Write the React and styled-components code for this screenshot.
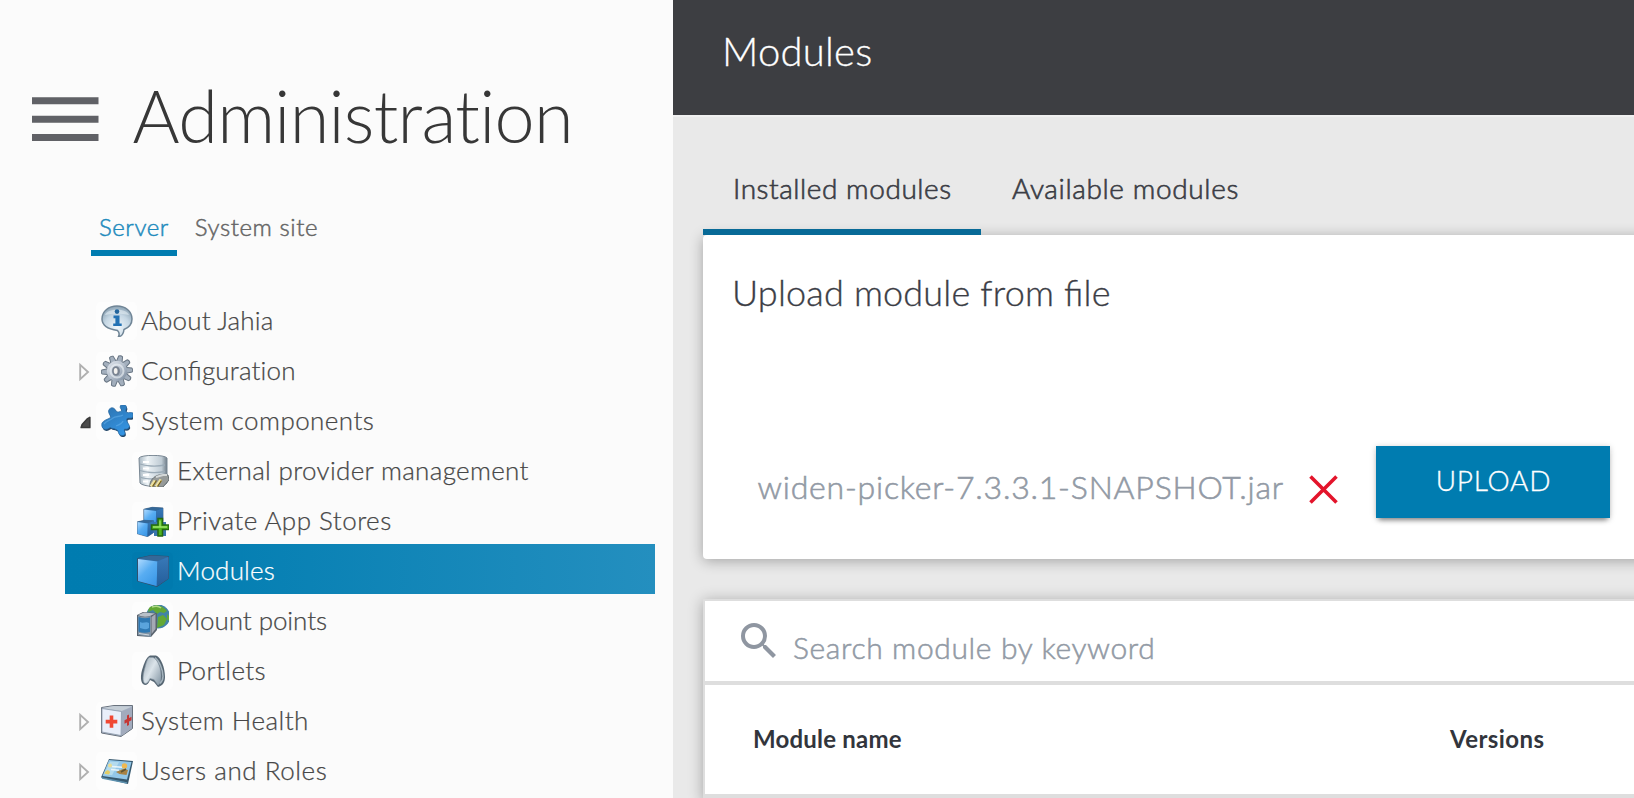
import React from 'react';
import styled, { createGlobalStyle, css } from 'styled-components';
import { MdSearch } from 'react-icons/md';

const GlobalStyle = createGlobalStyle`
  *, *::before, *::after { box-sizing: border-box; }
  html, body { margin: 0; height: 100%; overflow: hidden; }
  body {
    font-family: Lato, "Open Sans", sans-serif;
    font-weight: 300;
    background: #e9e9e9;
  }
`;

const Page = styled.div`
  display: flex;
  height: 798px;
  overflow: hidden;
`;

const Sidebar = styled.aside`
  flex: 0 0 673px;
  background: #fbfbfb;
  overflow: hidden;
`;

const SidebarHeader = styled.header`
  display: flex;
  align-items: flex-start;
  padding: 78px 0 0 32px;
`;

const MenuIcon = styled.svg`
  width: 67px;
  height: 45px;
  margin-top: 19px;
  fill: #606166;
`;

const SidebarTitle = styled.h1`
  margin: 0 0 0 33.6px;
  font-size: 72px;
  line-height: 74px;
  height: 72px;
  font-weight: 300;
  letter-spacing: -0.74px;
  color: #373737;
  white-space: nowrap;
`;

const SiteTabs = styled.nav`
  display: flex;
  gap: 10px;
  padding: 53px 0 0 91px;
`;

const SiteTab = styled.a`
  padding: 0 8px;
  height: 53px;
  line-height: 48px;
  font-size: 24px;
  -webkit-text-stroke: 0.5px currentColor;
  letter-spacing: 0.56px;
  color: ${(p) => (p.$active ? '#1f8bbd' : '#666')};
  border-bottom: 6px solid ${(p) => (p.$active ? '#007cb0' : 'transparent')};
`;

const Tree = styled.ul`
  list-style: none;
  margin: 38px 18px 0 65px;
  padding: 0;
`;

const TreeRow = styled.li`
  display: flex;
  align-items: center;
  height: 50px;
  padding-left: ${(p) => (p.$nested ? 48 : 12)}px;
  color: #474747;
  ${(p) =>
    p.$selected &&
    css`
      color: #fff;
      background: linear-gradient(90deg, #007cb0 0%, #017db1 18%, #248fbf 100%);
    `}
`;

const Arrow = styled.svg`
  flex: none;
  width: 16px;
  height: 22px;
  margin-top: 6px;
`;

const IconTile = styled.span`
  flex: none;
  display: grid;
  place-items: center;
  width: 41px;
  height: 38px;
  margin: 4px 0 0 2.5px;
  border-radius: 5px;
  background: ${(p) => (p.$selected ? '#007aae' : '#fdfdfd')};

  svg { width: 32px; height: 32px; overflow: hidden; margin-left: 2px; }
`;

const TreeLabel = styled.span`
  margin: 2px 0 0 4.5px;
  font-size: 26px;
  line-height: 40px;
  letter-spacing: ${(p) => p.$tracking}px;
  -webkit-text-stroke: 0.25px currentColor;
  white-space: nowrap;
`;

const Ligature = styled.span`
  font-feature-settings: "liga" 1;
`;

const Content = styled.main`
  flex: 1;
  min-width: 0;
  overflow: hidden;
  background: #e9e9e9;
`;

const TopBar = styled.header`
  height: 115px;
  padding-left: 49px;
  background: #3d3e42;
  box-shadow: 0 2px 0 #f0f0f0;
  color: #fff;
  font-size: 40px;
  line-height: 103px;
  letter-spacing: 0.25px;
  -webkit-text-stroke: 0.3px currentColor;
`;

const ModuleTabs = styled.nav`
  display: flex;
  padding: 32px 0 0 30px;
`;

const ModuleTab = styled.a`
  height: 88px;
  padding: 0 29.5px 0 30px;
  font-size: 28px;
  line-height: 82px;
  letter-spacing: 0.56px;
  -webkit-text-stroke: 0.65px currentColor;
  color: #3b3d45;
  white-space: nowrap;
  border-bottom: 6px solid ${(p) => (p.$active ? '#086a97' : 'transparent')};

  &:first-child { width: 278px; }
  &:last-child { padding-left: 31px; letter-spacing: 0.64px; }
`;

const Panel = styled.section`
  width: 1100px;
  margin-left: 30px;
  background: #fff;
  box-shadow: 0 2px 14px rgba(0, 0, 0, 0.3);
`;

const UploadPanel = styled(Panel)`
  height: 324px;
  padding: 33px 0 0 29px;
  border-radius: 4px;
`;

const PanelTitle = styled.h2`
  margin: 0;
  font-size: 36px;
  line-height: 49px;
  height: 48px;
  font-weight: 300;
  letter-spacing: 0.18px;
  font-feature-settings: "liga" 1;
  -webkit-text-stroke: 0.35px currentColor;
  color: #3b3d45;
`;

const UploadRow = styled.div`
  display: flex;
  align-items: flex-start;
  padding: 130px 0 0 25.5px;
`;

const FileName = styled.span`
  width: 551px;
  padding-top: 9px;
  font-size: 32px;
  line-height: 63px;
  letter-spacing: 0.79px;
  -webkit-text-stroke: 0.6px currentColor;
  color: #929aa5;
  white-space: nowrap;
`;

const RemoveIcon = styled.svg`
  width: 29px;
  height: 29px;
  margin-top: 28.5px;
  fill: none;
  stroke: #e3142b;
  stroke-width: 3.6;
`;

const UploadButton = styled.button`
  width: 234px;
  height: 72px;
  margin-left: 38.5px;
  padding: 0 0 4px 1px;
  border: 0;
  background: #007cb0;
  box-shadow: 0 5px 5px -3px rgba(0, 0, 0, 0.4), 0 1px 6px rgba(0, 0, 0, 0.22);
  color: #fff;
  font: 300 28px/68px Lato, "Open Sans", sans-serif;
  letter-spacing: 0.8px;
  -webkit-text-stroke: 0.35px currentColor;
`;

const ModulesPanel = styled(Panel)`
  margin-top: 40px;
  border: 2px solid #dedede;
`;

const SearchBar = styled.label`
  display: flex;
  height: 84px;
  padding-left: 30px;
  border-bottom: 4px solid #dedede;
  color: #8f96a1;

  svg { flex: none; margin-top: 16px; }
`;

const SearchField = styled.span`
  margin: 6px 0 0 10px;
  font-size: 30px;
  line-height: 80px;
  letter-spacing: 0.64px;
  -webkit-text-stroke: 0.55px currentColor;
  color: #929aa5;
`;

const TableHead = styled.div`
  display: grid;
  grid-template-columns: 697px 1fr;
  height: 113px;
  padding-left: 48px;
  border-bottom: 4px solid #dedede;
`;

const ColumnTitle = styled.span`
  font-size: 24px;
  line-height: 107px;
  font-weight: 700;
  letter-spacing: ${(p) => p.$tracking}px;
  color: #32353c;
`;

const InfoIcon = () => (
  <svg viewBox="0 0 32 32">
    <defs>
      <radialGradient id="bub" cx=".5" cy=".7" r=".7">
        <stop offset="0" stopColor="#f1f7fb" /><stop offset=".6" stopColor="#c5d7e4" /><stop offset="1" stopColor="#8ca3b4" />
      </radialGradient>
    </defs>
    <path d="M16 1C8 1 1 6 1 14c0 6 5.500 10 15.500 11.500 1.500 1.500 2 4 1 6 3 0 5-2.500 5.500-7C28 22.500 31 18.500 31 14 31 6 24 1 16 1z" fill="url(#bub)" stroke="#708596" strokeWidth="1.500" />
    <path d="M4 10C6 3 26 3 28 10c-8-2-16-2-24 0z" fill="#e2edf4" opacity=".6" />
    <circle cx="16" cy="6.600" r="2.300" fill="#22659d" />
    <path d="M12.500 10.500h6v8h2.200v2.500h-8.500v-2.500h2.200v-5.300h-1.900z" fill="#2372b4" />
  </svg>
);

const GearIcon = () => (
  <svg viewBox="0 0 32 32">
    <defs>
      <linearGradient id="gear" x1="0" y1="0" x2="1" y2="1">
        <stop offset="0" stopColor="#e3e8ef" /><stop offset=".5" stopColor="#b6c0cd" /><stop offset="1" stopColor="#75869a" />
      </linearGradient>
    </defs>
    <g fill="#a3afbd" stroke="#697684" strokeWidth="1">
      {[0, 36, 72, 108, 144, 180, 216, 252, 288, 324].map((a) => (
        <path key={a} d="M12.800 9L14 1q2-1.500 4 0l1.200 8z" transform={`rotate(${a + 14} 16 16)`} />
      ))}
    </g>
    <circle cx="16" cy="16" r="10.200" fill="url(#gear)" />
    <circle cx="16" cy="16" r="6.500" fill="none" stroke="#eff3f7" strokeWidth="2" opacity=".6" />
    <ellipse cx="15" cy="16" rx="3.900" ry="4.800" fill="#798391" />
    <ellipse cx="14.700" cy="16" rx="1.900" ry="2.900" fill="#f3f1ee" />
  </svg>
);

const PuzzleIcon = () => (
  <svg viewBox="0 0 32 32">
    <defs>
      <linearGradient id="puz" x1="0" y1="0" x2=".6" y2="1">
        <stop offset="0" stopColor="#2c70ab" /><stop offset="1" stopColor="#3495e4" />
      </linearGradient>
      <path id="puzShape" d="M9 13C11 11 6 8 8 4.500c3-3.500 6-1 7 1.500 1 1.500 4 1 5.500 0C21 4 18 3 19.500.500 22-1 26-.500 25.500 3c-.5 2-1.500 3 .5 4.500 2 .5 4-.5 6 .5v4c-2 2-4 .5-6 1.500-1.500 2.500 2 5 2.500 8-.5 2-2.500 3-5 2.500-1 1.500 1 3 .5 5-1 2-4.500 2-6 0-1-2-.5-4-3-4.500-2-1.500-4-.5-5.500-2-2 1-4 2.500-6.500 1.500C.500 22.500.500 20 1 18c2-3 5-3.500 8-5z" />
    </defs>
    <use href="#puzShape" y="1.600" x=".8" fill="#24486a" />
    <use href="#puzShape" fill="url(#puz)" stroke="#28679f" strokeWidth=".7" />
    <path d="M3 19c3-4 6-3 9-6 2-2 7-1 10-3M15 21c3-1 6-2 7-5" stroke="#6ab4ee" strokeWidth="1.300" fill="none" opacity=".5" />
  </svg>
);

const DatabaseIcon = () => (
  <svg viewBox="0 0 32 32">
    <defs>
      <linearGradient id="dbs">
        <stop offset="0" stopColor="#a8b7c2" /><stop offset=".3" stopColor="#edf3f6" /><stop offset=".8" stopColor="#c0ccd5" /><stop offset="1" stopColor="#6f7d88" />
      </linearGradient>
    </defs>
    <path d="M2 3C4-.500 28-.500 30 3v25c-4 5-24 4-27 0z" fill="url(#dbs)" stroke="#798793" />
    <path d="M3 9c5 2 16 3 25 1M3 15.500c5 2 16 3 25 1M3 22c4 2 9 2 14 2" stroke="#9babb7" strokeWidth="1.300" fill="none" />
    <path d="M6 7h6M6 13.500h6M6 20h6M6 26.500h5" stroke="#fff" strokeWidth="2" />
    <path d="M13 32c-1-6 4-11 9-12h9l1 5-6 7z" fill="#969a99" stroke="#666e71" />
    <path d="M19 22l7-2h4" stroke="#d4d8d8" strokeWidth="2" fill="none" />
    <path d="M14 31.500l4-6M19 31.500l5-7" stroke="#efe2a0" strokeWidth="3" />
    <path d="M15.500 31.500l4-6M20.500 31.500l4-6" stroke="#766018" strokeWidth="1.300" />
  </svg>
);

const CubeShape = ({ x = 0, y = 0, s = 1 }) => (
  <g transform={`translate(${x} ${y}) scale(${s})`}>
    <path d="M.500 3.500L14 .500l17.500 1v22L20 31.500.500 26z" fill="#2f6dab" stroke="#31506e" />
    <path d="M.500 3.500L14 .500l17.500 1L20.500 6z" fill="#346898" />
    <path d="M1 4l19.500 2.500-1 24.500L1 26z" fill="url(#cubeFace)" />
    <path d="M20.500 6.500l11-4.500v21.500L20 31z" fill="url(#cubeSide)" />
  </g>
);

const CubeDefs = () => (
  <defs>
    <linearGradient id="cubeFace" x1="0" y1="0" x2=".7" y2="1">
      <stop offset="0" stopColor="#b0dbff" /><stop offset=".5" stopColor="#58adf2" /><stop offset="1" stopColor="#3c99e8" />
    </linearGradient>
    <linearGradient id="cubeSide" x1="0" y1="0" x2="0" y2="1">
      <stop offset="0" stopColor="#3879b8" /><stop offset="1" stopColor="#245e9b" />
    </linearGradient>
  </defs>
);

const StoresIcon = () => (
  <svg viewBox="0 0 32 32">
    <CubeShape x={6.5} y={2} s={0.62} />
    <CubeShape x={0} y={15} s={0.53} />
    <path d="M17 17h12v14H17z" fill="#3a77ae" />
    <path d="M21 13.500h4.500v6.500h6.500v4.500h-6.500v6.500h-4.500v-6.500h-6.500v-4.500h6.500z" fill="#4fb41d" stroke="#256910" strokeWidth="1.500" />
    <path d="M23 15.500v6.500h-7M23 22h7" stroke="#a0e56c" strokeWidth="1.300" fill="none" />
  </svg>
);

const CubeIcon = () => (
  <svg viewBox="0 0 32 32">
    <CubeDefs />
    <CubeShape />
  </svg>
);

const MountIcon = () => (
  <svg viewBox="0 0 32 32">
    <circle cx="21" cy="11.500" r="12" fill="#4283a6" />
    <path d="M12 3c5-5 14-3 18 3l-3 2-4-1-3 2-4-4-5 2zM21 12l5-2 4 4-3 6-7 3zM30 9l2 2v5l-2-2z" fill="#63a834" />
    <path d="M15 2c3-1 7-1 9 1" stroke="#b0d98a" strokeWidth="1.500" fill="none" />
    <path d="M0 10l6-3 14 1v17l-6 7L0 31z" fill="#59636e" />
    <path d="M1 10.500c4 2 9 2 13 .5V32L1 30z" fill="#7f93a5" />
    <path d="M1.500 12c4 1.500 8 1.500 11.500.5V27c-4 1-8 1-11.500-.5z" fill="#2f79b3" />
    <path d="M3 17c3 2 6-1 9 1v5c-3 2-6 1-9 0z" fill="#5aa4dc" />
    <path d="M14.500 12l4-3v15l-4 5z" fill="#a4a9b4" />
    <path d="M1 10l6-2.500 11 1-5 2.500c-4 1-8 1-12-1z" fill="#b9c1c9" />
    <path d="M2 28.500l10 1.500" stroke="#cfd6dc" strokeWidth="1.200" />
  </svg>
);

const PortletIcon = () => (
  <svg viewBox="0 0 32 32">
    <defs>
      <linearGradient id="port" x1="0" y1="0" x2="1" y2=".8">
        <stop offset="0" stopColor="#9caab5" /><stop offset=".5" stopColor="#dbe4ea" /><stop offset="1" stopColor="#8fa0ad" />
      </linearGradient>
    </defs>
    <path d="M13 .500h6c5 2 9 12 9 21.500 0 6-3 9-7 10l-4-5-4-2c-1 3-3 5-5 5C3 29 3 20 6 12 8 6 10 2 13 .500z" fill="#566673" />
    <path d="M12 2.500h4c5 2 8 11 8 18 0 5-1 9-3 9.500l-4-5.500-4-1c-1 3-3 5-5 5-3-2-2-9 0-16 1-4 2-8 4-10z" fill="url(#port)" stroke="#8b9ba7" strokeWidth=".6" />
    <path d="M18 2.500c4 3 8 12 8 19 0 3-1 5-3 7" stroke="#a5b4be" strokeWidth="1.500" fill="none" />
  </svg>
);

const HealthIcon = () => (
  <svg viewBox="0 0 32 32">
    <path d="M.500 2.500L13 .500h18.500v23L20 31.500.500 28z" fill="#a8b3c6" stroke="#69727d" />
    <path d="M1 3L13 1l18 .5L20.500 6z" fill="#c5ced6" />
    <path d="M1 3.500l19.500 3-.5 24L1 27z" fill="#e9effa" stroke="#8d9bab" strokeWidth=".8" />
    <path d="M21 6.500l10-4.500v21l-10 7.500z" fill="#a2abbd" />
    <path d="M8.700 10.500h3.600v4.200h4v3.800h-4v4.200h-3.600v-4.200h-4v-3.800h4z" fill="#f04834" />
    <path d="M26 10.500l2-1v3.500l2.500-1.200v3.500l-2.500 1.200v3.500l-2 1V17.500L23.500 18.700v-3.500l2.500-1.200z" fill="#c53734" />
  </svg>
);

const UsersIcon = () => (
  <svg viewBox="0 0 32 32">
    <path d="M8 4l24 2-5 23L0 22.500z" fill="#36586e" />
    <path d="M8 5l22.500 2-4.500 17.500L1.500 21z" fill="#93c7e8" />
    <path d="M9 6.500l9 .8-7 13-8-1z" fill="#b4dbee" />
    <circle cx="9" cy="10.500" r="2" fill="#e9dc93" />
    <path d="M4 17c2-3 5-2 5 .5l-1 2-4.500-.7z" fill="#e3cd66" />
    <path d="M11 11.500l10 .8M10 14.500l8 .7" stroke="#e9f5fa" strokeWidth="1.500" />
    <circle cx="23.500" cy="11" r="2.700" fill="#efb851" />
    <path d="M15 17l7-3 5 1-1.500 5-7-1z" fill="#a88243" />
    <path d="M20 17l5-3" stroke="#5f5432" strokeWidth="1.800" />
    <path d="M1 23l25 5" stroke="#5d91af" strokeWidth="1.500" />
  </svg>
);

const ClosedArrow = () => (
  <Arrow viewBox="0 0 16 22">
    <path d="M3.200 3.800v14.400L11 11z" fill="#fdfdfd" stroke="#b0b0b0" strokeWidth="1.900" />
  </Arrow>
);

const OpenArrow = () => (
  <Arrow viewBox="0 0 16 22">
    <path d="M12.800 6.500v10H4.200l1-3 5-5.500z" fill="#4c4c4c" stroke="#3b3b3b" strokeWidth="1.700" strokeLinejoin="round" />
  </Arrow>
);

const EmptyArrow = () => <Arrow viewBox="0 0 16 22" />;

const arrows = { closed: ClosedArrow, open: OpenArrow, none: EmptyArrow };

const items = [
  { id: 'about', label: 'About Jahia', Icon: InfoIcon, arrow: 'none', tracking: 0.15 },
  { id: 'config', label: <>Con<Ligature>fi</Ligature>guration</>, Icon: GearIcon, arrow: 'closed', tracking: 0.18 },
  { id: 'components', label: 'System components', Icon: PuzzleIcon, arrow: 'open', tracking: 0.44 },
  { id: 'providers', label: 'External provider management', Icon: DatabaseIcon, nested: true, arrow: 'none', tracking: 0.33 },
  { id: 'stores', label: 'Private App Stores', Icon: StoresIcon, nested: true, arrow: 'none', tracking: 0.48 },
  { id: 'modules', label: 'Modules', Icon: CubeIcon, nested: true, arrow: 'none', selected: true, tracking: 0.2 },
  { id: 'mounts', label: 'Mount points', Icon: MountIcon, nested: true, arrow: 'none', tracking: -0.07 },
  { id: 'portlets', label: 'Portlets', Icon: PortletIcon, nested: true, arrow: 'none', tracking: 0.36 },
  { id: 'health', label: 'System Health', Icon: HealthIcon, arrow: 'closed', tracking: 0.46 },
  { id: 'users', label: 'Users and Roles', Icon: UsersIcon, arrow: 'closed', tracking: 0.55 },
];

export default function App() {
  return (
    <>
      <GlobalStyle />
      <Page>
        <Sidebar>
          <SidebarHeader>
            <MenuIcon viewBox="0 0 67 45">
              <path d="M0 .2h66.500v7H0zM0 18.700h66.500v7H0zM0 37h66.500v7H0z" />
            </MenuIcon>
            <SidebarTitle>Administration</SidebarTitle>
          </SidebarHeader>
          <SiteTabs>
            <SiteTab $active>Server</SiteTab>
            <SiteTab>System site</SiteTab>
          </SiteTabs>
          <Tree>
            {items.map(({ id, label, Icon, arrow, nested, selected, tracking }) => {
              const ArrowIcon = arrows[arrow];
              return (
                <TreeRow key={id} $nested={nested} $selected={selected}>
                  <ArrowIcon />
                  <IconTile $selected={selected}><Icon /></IconTile>
                  <TreeLabel $tracking={tracking}>{label}</TreeLabel>
                </TreeRow>
              );
            })}
          </Tree>
        </Sidebar>
        <Content>
          <TopBar>Modules</TopBar>
          <ModuleTabs>
            <ModuleTab $active>Installed modules</ModuleTab>
            <ModuleTab>Available modules</ModuleTab>
          </ModuleTabs>
          <UploadPanel>
            <PanelTitle>Upload module from file</PanelTitle>
            <UploadRow>
              <FileName>widen-picker-7.3.3.1-SNAPSHOT.jar</FileName>
              <RemoveIcon viewBox="0 0 29 29">
                <path d="M1.500 1.500l26 26M27.500 1.500l-26 26" />
              </RemoveIcon>
              <UploadButton>UPLOAD</UploadButton>
            </UploadRow>
          </UploadPanel>
          <ModulesPanel>
            <SearchBar>
              <MdSearch size={48} />
              <SearchField>Search module by keyword</SearchField>
            </SearchBar>
            <TableHead>
              <ColumnTitle $tracking={0.2}>Module name</ColumnTitle>
              <ColumnTitle $tracking={0.42}>Versions</ColumnTitle>
            </TableHead>
          </ModulesPanel>
        </Content>
      </Page>
    </>
  );
}
